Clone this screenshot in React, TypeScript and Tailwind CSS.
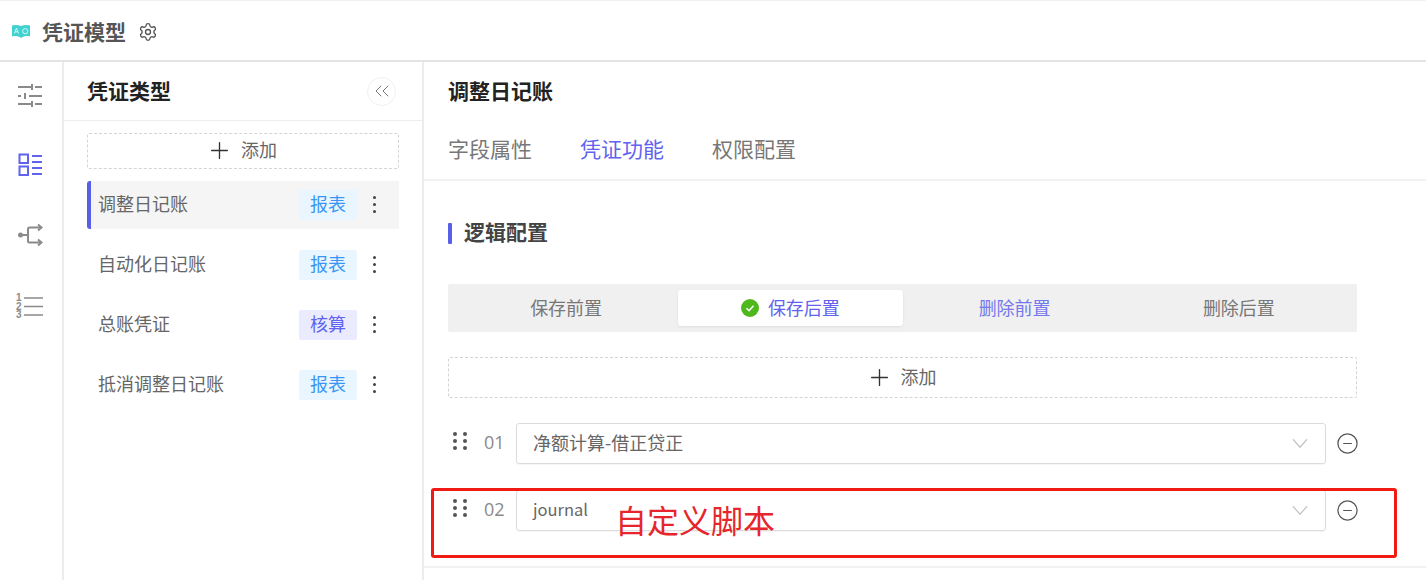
import { ReactElement } from "react";
import { ChevronsLeft, CircleMinus, Plus, Settings } from "lucide-react";

const types = [
  { name: "调整日记账", tag: "报表", active: true },
  { name: "自动化日记账", tag: "报表", active: false },
  { name: "总账凭证", tag: "核算", active: false },
  { name: "抵消调整日记账", tag: "报表", active: false },
];

function Logo(): ReactElement {
  return (
    <svg width="20" height="16" viewBox="0 0 20 16" className="mr-[11px]">
      <path d="M1 1.500c3-1 6-.8 9 .6 3-1.400 6-1.600 9-.6v11c-3-.8-6-.6-9 1.400-3-2-6-2.200-9-1.400z" fill="#3fd2d0" />
      <path d="M3.500 9.500 5.500 4l2 5.500M4.200 7.800h2.600" stroke="#d8f6f5" strokeWidth="1" fill="none" />
      <circle cx="14.200" cy="7.200" r="2.600" stroke="#d8f6f5" strokeWidth="1" fill="none" />
    </svg>
  );
}

function SlidersIcon(): ReactElement {
  return (
    <svg width="26" height="24" viewBox="0 0 26 24" stroke="#8a8a8a" strokeWidth="2" fill="none">
      <path d="M1 4h13M18 4h7M1 13h3M12 13h13M1 21h13M18 21h7" />
      <path d="M15 1v6M8 10v6M15 18v6" />
    </svg>
  );
}

function ListIcon(): ReactElement {
  return (
    <svg width="24" height="24" viewBox="0 0 24 24" stroke="#5f63ee" strokeWidth="2" fill="none">
      <rect x="1.500" y="1.500" width="8.500" height="8.500" />
      <rect x="1.500" y="13.500" width="8.500" height="8.500" />
      <path d="M14 3h10M14 9h10M14 15h10M14 21h10" />
    </svg>
  );
}

function FlowIcon(): ReactElement {
  return (
    <svg width="26" height="24" viewBox="0 0 26 24" stroke="#8a8a8a" strokeWidth="2" fill="none">
      <circle cx="3.500" cy="12" r="2.500" fill="#8a8a8a" stroke="none" />
      <path d="M5 12h6M11 12V6c0-1 .5-1.500 1.500-1.500H24M11 12v6c0 1 .5 1.500 1.500 1.500H24" />
      <path d="M21 1.500 24.500 4.500 21 7.500M21 16.500l3.500 3-3.500 3" />
    </svg>
  );
}

function OrderIcon(): ReactElement {
  return (
    <svg width="28" height="26" viewBox="0 0 28 26" fill="none">
      <text x="0" y="8" fontSize="10" fontWeight="700" fill="#8a8a8a" fontFamily="Liberation Sans">1</text>
      <text x="0" y="16.500" fontSize="10" fontWeight="700" fill="#8a8a8a" fontFamily="Liberation Sans">2</text>
      <text x="0" y="25" fontSize="10" fontWeight="700" fill="#8a8a8a" fontFamily="Liberation Sans">3</text>
      <path d="M8 5h19M8 13.500h19M8 22h19" stroke="#8a8a8a" strokeWidth="1.500" />
    </svg>
  );
}

function Dots(): ReactElement {
  return (
    <span className="flex flex-col items-center gap-[4px] -ml-[1px] mr-[1px] -mt-[1px]">
      <i className="w-[3px] h-[3px] rounded-full bg-[#444]" />
      <i className="w-[3px] h-[3px] rounded-full bg-[#444]" />
      <i className="w-[3px] h-[3px] rounded-full bg-[#444]" />
    </span>
  );
}

function DragHandle(): ReactElement {
  return (
    <span className="grid grid-cols-2 gap-x-[6px] gap-y-[3px] w-[14px]">
      {[0, 1, 2, 3, 4, 5].map((i) => (
        <i key={i} className="w-[4px] h-[4px] rounded-full bg-[#555]" />
      ))}
    </span>
  );
}

function SelectRow({ no, value, textClass }: { no: string; value: string; textClass: string }): ReactElement {
  return (
    <div className="flex items-center h-[41px]">
      <div className="w-[68px] flex items-center -mt-[5px] pl-[5px]">
        <DragHandle />
        <span className="ml-[17px] mt-[1px] text-[18px] leading-none text-[#8a8a8a] font-['Open_Sans',sans-serif]">{no}</span>
      </div>
      <div className="w-[810px] h-[41px] border border-[#dcdcdc] rounded-[3px] flex items-center justify-between pl-[16px] pr-[17px] shadow-[0_1px_1px_rgba(0,0,0,0.04)]">
        <span className={`pb-[3px] text-[#666] ${textClass}`}>{value}</span>
        <svg width="16" height="11" viewBox="0 0 17 11" stroke="#c4c4c4" strokeWidth="1.300" fill="none">
          <path d="M1 1l7.500 8.500L16 1" />
        </svg>
      </div>
      <div className="w-[31px] pl-[10px] -mt-[1px]">
        <CircleMinus size={23} strokeWidth={1.300} className="text-[#555]" />
      </div>
    </div>
  );
}

function AddButton({ className }: { className: string }): ReactElement {
  return (
    <div className={`flex items-center justify-center border border-dashed border-[#d4d4d4] rounded-[2px] text-[#666] pr-[3px] ${className}`}>
      <Plus size={27} strokeWidth={1.200} className="text-[#333] mr-[8px]" />
      <span className="text-[18px] leading-none pb-[3px]">添加</span>
    </div>
  );
}

export default function App(): ReactElement {
  return (
    <div className="relative w-[1426px] h-[580px] overflow-hidden bg-white font-['Noto_Sans_CJK_SC','Noto_Sans',sans-serif]">
      <header className="h-[62px] flex items-center pl-[11px] pt-[3px] border-b-2 border-b-[#e4e4e4] border-t border-t-[#f2f2f2]">
        <Logo />
        <h1 className="text-[21px] font-bold text-[#555] leading-none pb-[2px]">凭证模型</h1>
        <Settings size={20} strokeWidth={1.600} className="ml-[12px] text-[#555]" />
      </header>

      <div className="flex h-[518px]">
        <nav className="w-[64px] shrink-0 border-r-2 border-r-[#ececec] flex flex-col items-center pt-[21px] gap-[46px] pr-[3px]">
          <SlidersIcon />
          <ListIcon />
          <FlowIcon />
          <OrderIcon />
        </nav>

        <aside className="w-[360px] shrink-0 border-r-2 border-r-[#ececec] flex flex-col">
          <div className="h-[59px] shrink-0 border-b border-b-[#eeeeee] flex items-center justify-between pl-[23px] pr-[26px]">
            <h2 className="text-[21px] font-bold text-[#222] leading-none pb-[2px]">凭证类型</h2>
            <span className="w-[29px] h-[29px] rounded-full border border-[#f0f0f0] flex items-center justify-center">
              <ChevronsLeft size={24} strokeWidth={1} className="text-[#777]" />
            </span>
          </div>
          <div className="pl-[23px] pr-[23px] pt-[12px] flex flex-col">
            <AddButton className="h-[36px] pb-[2px]" />
            <ul className="mt-[12px] flex flex-col gap-[12px]">
              {types.map((t) => (
                <li
                  key={t.name}
                  className={`h-[48px] flex items-center justify-between pr-[22px] ${
                    t.active ? "bg-[#f5f5f5] border-l-[4px] border-l-[#5a5fe8] rounded-l-[3px] pl-[7px]" : "pl-[11px]"
                  }`}
                >
                  <span className="text-[18px] text-[#666] leading-none pb-[5px]">{t.name}</span>
                  <span className="flex items-center gap-[17px]">
                    <span
                      className={`w-[58px] h-[30px] -mt-[1px] flex items-center justify-center rounded-[2px] text-[18px] leading-none pb-[3px] ${
                        t.tag === "核算" ? "bg-[#ebebff] text-[#5f63ee]" : "bg-[#e9f6ff] text-[#3a96f5]"
                      }`}
                    >
                      {t.tag}
                    </span>
                    <Dots />
                  </span>
                </li>
              ))}
            </ul>
          </div>
        </aside>

        <main className="flex-1 flex flex-col">
          <div className="pl-[24px] pt-[14px] h-[119px] border-b-2 border-b-[#f2f2f2] shrink-0">
            <h2 className="text-[21px] font-bold text-[#222] leading-[28px]">调整日记账</h2>
            <div className="flex gap-[48px] mt-[30px] text-[21px] leading-[28px] text-[#777]">
              <span>字段属性</span>
              <span className="text-[#5f63ee]">凭证功能</span>
              <span>权限配置</span>
            </div>
          </div>

          <section className="pl-[24px] pr-[69px] h-[387px] border-b-2 border-b-[#f2f2f2] shrink-0">
            <div className="flex items-center h-[22px] mt-[41px]">
              <i className="w-[4px] h-[21px] bg-[#5a5fe8] rounded-[1px]" />
              <h3 className="ml-[12px] text-[21px] font-bold text-[#444] leading-none pb-[4px]">逻辑配置</h3>
            </div>

            <div className="mt-[40px] h-[48px] bg-[#f0f0f0] rounded-[2px] p-[6px] grid grid-cols-4 text-[18px] leading-none">
              <div className="flex items-center justify-center pb-[2px] text-[#777]">保存前置</div>
              <div className="flex items-center justify-center pb-[2px] bg-white rounded-[3px] shadow-[0_1px_3px_rgba(0,0,0,0.08)] text-[#5f63ee]">
                <svg width="18" height="18" viewBox="0 0 18 18" className="mr-[9px] mt-[2px]">
                  <circle cx="9" cy="9" r="9" fill="#4fb81c" />
                  <path d="M5.500 9.200 8 11.700l4.500-5" stroke="#fff" strokeWidth="1.600" fill="none" />
                </svg>
                保存后置
              </div>
              <div className="flex items-center justify-center pb-[2px] text-[#7478ec]">删除前置</div>
              <div className="flex items-center justify-center pb-[2px] text-[#777]">删除后置</div>
            </div>

            <AddButton className="h-[41px] mt-[25px]" />

            <div className="mt-[25px] flex flex-col gap-[26px]">
              <SelectRow no="01" value="净额计算-借正贷正" textClass="text-[18px]" />
              <SelectRow no="02" value="journal" textClass="text-[16.500px]" />
            </div>
          </section>
        </main>
      </div>

      <div className="absolute left-[431px] top-[488px] w-[966px] h-[70px] border-[3px] border-[#f01c14] rounded-[3px] pointer-events-none" />
      <span className="absolute left-[615px] top-[497px] text-[32px] leading-[44px] text-[#e6262c]">自定义脚本</span>
    </div>
  );
}
